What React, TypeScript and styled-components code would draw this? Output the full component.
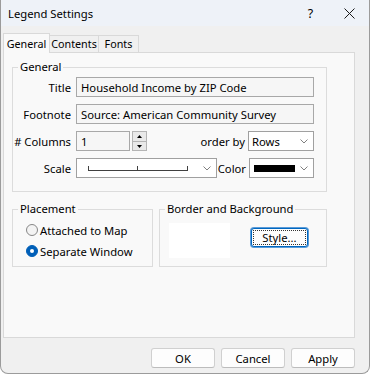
import React from 'react';
import styled, { createGlobalStyle } from 'styled-components';

const GlobalStyle = createGlobalStyle`
    html, body {
        margin: 0;
        padding: 0;
        background: #ffffff;
    }
    body {
        font-family: "Noto Sans", "Open Sans", sans-serif;
        font-size: 11.25px;
        color: #000000;
    }
    * {
        box-sizing: border-box;
    }
`;

const Window = styled.div`
    width: 370px;
    height: 374px;
    background: #f0f0f0;
    border: 1px solid #9b9b9b;
    border-top: none;
    border-radius: 0 0 8px 8px;
    display: flex;
    flex-direction: column;
    overflow: hidden;
`;

const TitleBar = styled.div`
    height: 26px;
    background: #eef2f8;
    display: flex;
    align-items: center;
    padding-left: 7px;
`;

const TitleText = styled.span`
    flex: 1;
`;

const CaptionButton = styled.div`
    width: 39px;
    height: 26px;
    display: flex;
    align-items: center;
    justify-content: center;
    font-size: 12.5px;
`;

const TabStrip = styled.div`
    display: flex;
    align-items: flex-end;
    height: 19px;
    margin: 7px 0 0 2px;
    position: relative;
    z-index: 1;
`;

const Tab = styled.div<{ $active?: boolean; $width: number }>`
    width: ${p => p.$width}px;
    height: ${p => (p.$active ? 20 : 17)}px;
    margin-bottom: ${p => (p.$active ? -1 : 0)}px;
    border: 1px solid #d9d9d9;
    border-bottom: none;
    border-left-width: ${p => (p.$active ? 1 : 0)}px;
    background: ${p => (p.$active ? '#f9f9f9' : '#f0f0f0')};
    display: flex;
    align-items: center;
    justify-content: center;
    white-space: nowrap;
    font-size: 10.75px;
`;

const Panel = styled.div`
    margin-left: 2px;
    width: 352px;
    height: 286px;
    border: 1px solid #d9d9d9;
    background: #f9f9f9;
    padding: 6px 0 0 8px;
`;

const Group = styled.fieldset<{ $width: number; $height: number }>`
    width: ${p => p.$width}px;
    height: ${p => p.$height}px;
    margin: 0;
    padding: 0;
    border: 1px solid #dcdcdc;
    border-radius: 0;
    min-width: 0;
`;

const GroupLabel = styled.legend`
    margin-left: 5px;
    padding: 0 2px;
    line-height: 16px;
    white-space: nowrap;
`;

const FieldGrid = styled.div`
    display: grid;
    grid-template-columns: 58px 238px;
    column-gap: 5px;
    row-gap: 7px;
    padding-top: 2px;
`;

const FieldLabel = styled.label`
    height: 20px;
    display: flex;
    align-items: center;
    justify-content: flex-end;
    white-space: nowrap;
`;

const FieldRow = styled.div`
    display: flex;
    align-items: center;
    height: 20px;
`;

const TextBox = styled.div<{ $width?: number }>`
    width: ${p => (p.$width ? `${p.$width}px` : '100%')};
    height: 20px;
    border: 1px solid #a8a8a8;
    background: #f6f6f6;
    display: flex;
    align-items: center;
    padding-left: 4px;
    white-space: nowrap;
    overflow: hidden;
`;

const Spinner = styled.div`
    width: 15px;
    height: 20px;
    margin-left: 2px;
    border: 1px solid #b4b4b4;
    background: #e9e9e9;
    display: grid;
    grid-template-rows: 1fr 1fr;
`;

const SpinHalf = styled.div<{ $down?: boolean }>`
    display: flex;
    align-items: center;
    justify-content: center;
    border-top: ${p => (p.$down ? '1px solid #b4b4b4' : 'none')};
`;

const InlineLabel = styled.span`
    flex: 1;
    text-align: right;
    padding-right: 3px;
    white-space: nowrap;
`;

const Combo = styled.div<{ $width: number }>`
    width: ${p => p.$width}px;
    height: 20px;
    border: 1px solid #a0a0a0;
    background: #ffffff;
    display: flex;
    align-items: center;
    padding-left: 3px;
`;

const ComboValue = styled.div`
    flex: 1;
    display: flex;
    align-items: center;
    overflow: hidden;
`;

const Chevron = styled.div`
    width: 18px;
    display: flex;
    justify-content: center;
    align-items: center;
`;

const Swatch = styled.div`
    width: 42px;
    height: 7px;
    margin-left: 1px;
    background: #000000;
`;

const LowerRow = styled.div`
    display: flex;
    gap: 6px;
    margin-top: 9px;
`;

const RadioList = styled.div`
    display: flex;
    flex-direction: column;
    gap: 5px;
    padding: 5px 0 0 13px;
`;

const RadioRow = styled.label`
    display: flex;
    align-items: center;
    gap: 2px;
    height: 16px;
    white-space: nowrap;
`;

const RadioDot = styled.span<{ $checked?: boolean }>`
    width: 12px;
    height: 12px;
    border-radius: 50%;
    border: 1px solid ${p => (p.$checked ? '#005fb8' : '#868686')};
    background: ${p => (p.$checked ? '#005fb8' : '#f3f3f3')};
    display: flex;
    align-items: center;
    justify-content: center;
    &::after {
        content: '';
        width: 4px;
        height: 4px;
        border-radius: 50%;
        background: #ffffff;
        display: ${p => (p.$checked ? 'block' : 'none')};
    }
`;

const BorderBody = styled.div`
    display: flex;
    align-items: flex-start;
    padding: 6px 0 0 9px;
`;

const Preview = styled.div`
    width: 61px;
    height: 35px;
    background: #ffffff;
`;

const StyleButton = styled.button`
    margin: 5px 0 0 21px;
    width: 57px;
    height: 19px;
    padding: 0;
    border: 1px solid #0067c0;
    border-radius: 3px;
    box-shadow: 0 0 0 1px #5a9bd8;
    background: #fdfdfd;
    font: inherit;
    color: #000000;
    position: relative;
    &::after {
        content: '';
        position: absolute;
        inset: 1px;
        border: 1px dotted #333333;
    }
`;

const Footer = styled.div`
    display: flex;
    justify-content: flex-end;
    gap: 6px;
    padding: 10px 14px 0 0;
`;

const DialogButton = styled.button`
    width: 64px;
    height: 20px;
    padding: 0;
    border: 1px solid #d0d0d0;
    border-bottom-color: #bcbcbc;
    border-radius: 3px;
    background: #fdfdfd;
    font: inherit;
    color: #000000;
`;

function ChevronIcon() {
    return (
        <svg width="8" height="5" viewBox="0 0 8 5">
            <path d="M0.5 0.5 L4 4 L7.5 0.5" fill="none" stroke="#808080" strokeWidth="1" />
        </svg>
    );
}

function ScaleBar() {
    return (
        <svg width="112" height="8" viewBox="0 0 112 8">
            <path d="M8 6.5 H108" stroke="#404040" strokeWidth="1.2" />
            <path d="M8.5 2 V7 M57.5 2 V7 M107.5 2 V7" stroke="#404040" strokeWidth="1" />
        </svg>
    );
}

export default function App() {
    return (
        <>
            <GlobalStyle />
            <Window>
                <TitleBar>
                    <TitleText>Legend Settings</TitleText>
                    <CaptionButton>?</CaptionButton>
                    <CaptionButton>
                        <svg width="11" height="11" viewBox="0 0 11 11">
                            <path d="M0.5 0.5 L10.5 10.5 M10.5 0.5 L0.5 10.5" stroke="#1a1a1a" strokeWidth="1" />
                        </svg>
                    </CaptionButton>
                </TitleBar>

                <TabStrip>
                    <Tab $active $width={47}>General</Tab>
                    <Tab $width={49}>Contents</Tab>
                    <Tab $width={40}>Fonts</Tab>
                </TabStrip>

                <Panel>
                    <Group $width={315} $height={133}>
                        <GroupLabel>General</GroupLabel>
                        <FieldGrid>
                            <FieldLabel>Title</FieldLabel>
                            <TextBox>Household Income by ZIP Code</TextBox>

                            <FieldLabel>Footnote</FieldLabel>
                            <TextBox>Source: American Community Survey</TextBox>

                            <FieldLabel># Columns</FieldLabel>
                            <FieldRow>
                                <TextBox $width={54}>1</TextBox>
                                <Spinner>
                                    <SpinHalf>
                                        <svg width="5" height="3" viewBox="0 0 5 3">
                                            <path d="M0 3 L2.5 0 L5 3 Z" fill="#000" />
                                        </svg>
                                    </SpinHalf>
                                    <SpinHalf $down>
                                        <svg width="5" height="3" viewBox="0 0 5 3">
                                            <path d="M0 0 L2.5 3 L5 0 Z" fill="#000" />
                                        </svg>
                                    </SpinHalf>
                                </Spinner>
                                <InlineLabel>order by</InlineLabel>
                                <Combo $width={66}>
                                    <ComboValue>Rows</ComboValue>
                                    <Chevron>
                                        <ChevronIcon />
                                    </Chevron>
                                </Combo>
                            </FieldRow>

                            <FieldLabel>Scale</FieldLabel>
                            <FieldRow>
                                <Combo $width={141}>
                                    <ComboValue>
                                        <ScaleBar />
                                    </ComboValue>
                                    <Chevron>
                                        <ChevronIcon />
                                    </Chevron>
                                </Combo>
                                <InlineLabel>Color</InlineLabel>
                                <Combo $width={65}>
                                    <ComboValue>
                                        <Swatch />
                                    </ComboValue>
                                    <Chevron>
                                        <ChevronIcon />
                                    </Chevron>
                                </Combo>
                            </FieldRow>
                        </FieldGrid>
                    </Group>

                    <LowerRow>
                        <Group $width={141} $height={66}>
                            <GroupLabel>Placement</GroupLabel>
                            <RadioList>
                                <RadioRow>
                                    <RadioDot />
                                    Attached to Map
                                </RadioRow>
                                <RadioRow>
                                    <RadioDot $checked />
                                    Separate Window
                                </RadioRow>
                            </RadioList>
                        </Group>
                        <Group $width={168} $height={66}>
                            <GroupLabel>Border and Background</GroupLabel>
                            <BorderBody>
                                <Preview />
                                <StyleButton>Style...</StyleButton>
                            </BorderBody>
                        </Group>
                    </LowerRow>
                </Panel>

                <Footer>
                    <DialogButton>OK</DialogButton>
                    <DialogButton>Cancel</DialogButton>
                    <DialogButton>Apply</DialogButton>
                </Footer>
            </Window>
        </>
    );
}
